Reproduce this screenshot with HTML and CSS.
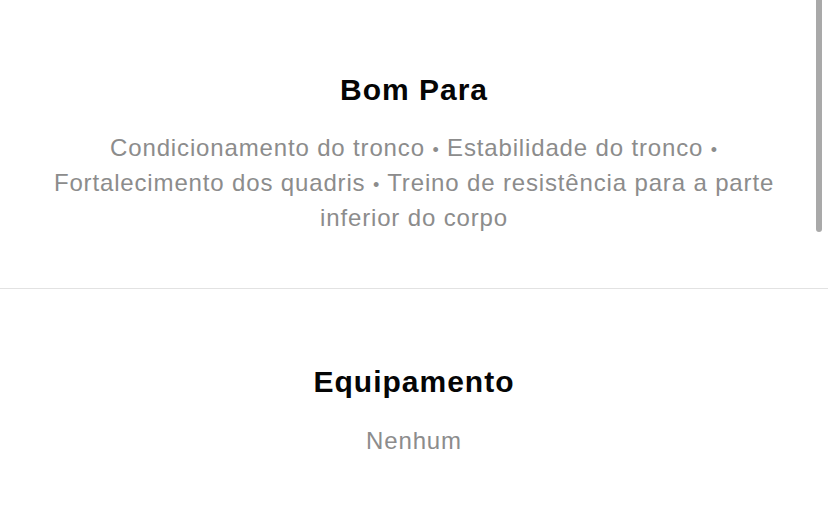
FILE: index.html
```html
<!DOCTYPE html>
<html lang="pt">
<head>
<meta charset="utf-8">
<link rel="stylesheet" href="styles.css">
</head>
<body>
<main class="page">
  <section class="block block-first">
    <h2 class="title">Bom Para</h2>
    <p class="desc">Condicionamento do tronco <span class="sep">•</span> Estabilidade do tronco <span class="sep">•</span> Fortalecimento dos quadris <span class="sep">•</span> Treino de resistência para a parte inferior do corpo</p>
  </section>
  <section class="block block-second">
    <h2 class="title">Equipamento</h2>
    <p class="desc">Nenhum</p>
  </section>
</main>
<div class="scrollbar"></div>
</body>
</html>
```

FILE: styles.css
```css
html, body {
  margin: 0;
  padding: 0;
  background: #ffffff;
}
body {
  font-family: "Liberation Sans", Arial, sans-serif;
  width: 828px;
  height: 509px;
  overflow: hidden;
  position: relative;
}
.page {
  display: flex;
  flex-direction: column;
}
.block {
  display: flex;
  flex-direction: column;
  align-items: center;
  text-align: center;
  padding: 0 46px;
}
.block-first {
  padding-top: 73px;
  padding-bottom: 53px;
  border-bottom: 1px solid #e2e2e2;
}
.block-second {
  padding-top: 76px;
}
.title {
  margin: 0;
  font-size: 30px;
  line-height: 34px;
  font-weight: 700;
  letter-spacing: 1px;
  color: #050505;
}
.desc {
  margin: 0;
  font-size: 24px;
  line-height: 35px;
  letter-spacing: 0.85px;
  color: #8c8c8c;
}
.sep {
  font-size: 18px;
  line-height: 18px;
}
.block-first .desc {
  margin-top: 23px;
}
.block-second .desc {
  margin-top: 24px;
}
.scrollbar {
  position: absolute;
  top: 0;
  left: 816px;
  width: 6px;
  height: 232px;
  border-radius: 0 0 3px 3px;
  background: #a9a9a9;
}
```
